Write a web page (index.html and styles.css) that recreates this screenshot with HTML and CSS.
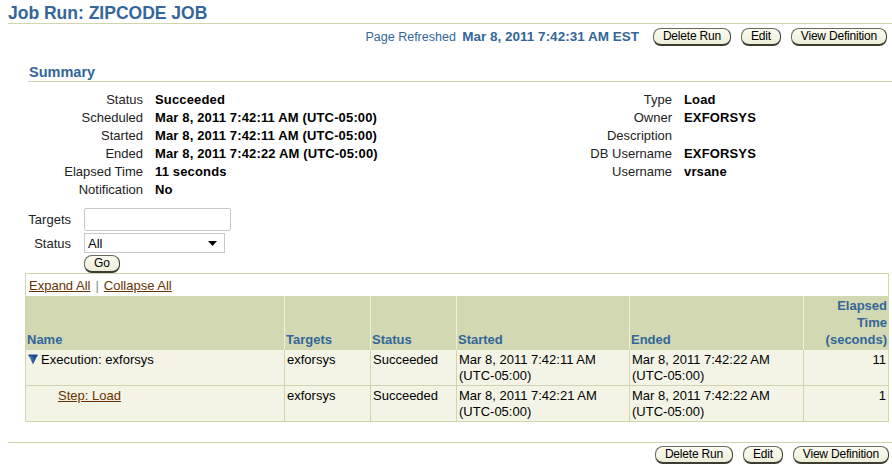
FILE: index.html
```html
<!DOCTYPE html>
<html>
<head>
<meta charset="utf-8">
<link rel="stylesheet" href="styles.css">
</head>
<body>
<div class="page">
  <h1 class="title">Job Run: ZIPCODE JOB</h1>
  <div class="actions">
    <span class="refreshed">Page Refreshed <b>Mar 8, 2011 7:42:31 AM EST</b></span>
    <div class="btns">
      <button class="btn">Delete Run</button>
      <button class="btn">Edit</button>
      <button class="btn">View Definition</button>
    </div>
  </div>

  <div class="section">
    <h2 class="subtitle">Summary</h2>
    <div class="summary">
      <div class="kv left">
        <span class="k">Status</span><span class="v">Succeeded</span>
        <span class="k">Scheduled</span><span class="v">Mar 8, 2011 7:42:11 AM (UTC-05:00)</span>
        <span class="k">Started</span><span class="v">Mar 8, 2011 7:42:11 AM (UTC-05:00)</span>
        <span class="k">Ended</span><span class="v">Mar 8, 2011 7:42:22 AM (UTC-05:00)</span>
        <span class="k">Elapsed Time</span><span class="v">11 seconds</span>
        <span class="k">Notification</span><span class="v">No</span>
      </div>
      <div class="kv right">
        <span class="k">Type</span><span class="v">Load</span>
        <span class="k">Owner</span><span class="v">EXFORSYS</span>
        <span class="k">Description</span><span class="v"></span>
        <span class="k">DB Username</span><span class="v">EXFORSYS</span>
        <span class="k">Username</span><span class="v">vrsane</span>
      </div>
    </div>
  </div>

  <div class="filter">
    <label class="fl">Targets</label><input class="inp" type="text">
    <label class="fl">Status</label>
    <div class="sel"><span>All</span><svg width="9" height="5" viewBox="0 0 9 5"><polygon points="0,0 9,0 4.5,5" fill="#000"/></svg></div>
    <span></span><div><button class="btn go">Go</button></div>
  </div>

  <table class="grid">
    <colgroup>
      <col style="width:259px"><col style="width:86px"><col style="width:86px"><col style="width:173px"><col style="width:174px"><col>
    </colgroup>
    <tr class="tools"><td colspan="6"><a href="#">Expand All</a><span class="sep">|</span><a href="#">Collapse All</a></td></tr>
    <tr class="head">
      <th>Name</th><th>Targets</th><th>Status</th><th>Started</th><th>Ended</th><th class="num">Elapsed<br>Time<br>(seconds)</th>
    </tr>
    <tr>
      <td><svg class="tri" width="10" height="11" viewBox="0 0 10 11"><defs><linearGradient id="g" x1="0" y1="0" x2="1" y2="0"><stop offset="0" stop-color="#6f9ad0"/><stop offset="0.5" stop-color="#2a5ca0"/><stop offset="1" stop-color="#173f78"/></linearGradient></defs><polygon points="0.5,1 9.5,1 5,10.5" fill="url(#g)"/><rect x="0.5" y="0.5" width="9" height="2" fill="#1d4a88"/></svg>Execution: exforsys</td>
      <td>exforsys</td><td>Succeeded</td>
      <td>Mar 8, 2011 7:42:11 AM<br>(UTC-05:00)</td>
      <td>Mar 8, 2011 7:42:22 AM<br>(UTC-05:00)</td>
      <td class="num">11</td>
    </tr>
    <tr>
      <td class="step"><a href="#">Step: Load</a></td>
      <td>exforsys</td><td>Succeeded</td>
      <td>Mar 8, 2011 7:42:21 AM<br>(UTC-05:00)</td>
      <td>Mar 8, 2011 7:42:22 AM<br>(UTC-05:00)</td>
      <td class="num">1</td>
    </tr>
  </table>

  <div class="footer">
    <div class="btns">
      <button class="btn">Delete Run</button>
      <button class="btn">Edit</button>
      <button class="btn">View Definition</button>
    </div>
  </div>
</div>
</body>
</html>
```

FILE: styles.css
```css
html, body { margin: 0; padding: 0; background: #fff; }
body { font-family: "Liberation Sans", Arial, sans-serif; font-size: 13px; color: #000; }
.page { width: 892px; }

.title {
  margin: 0 0 0 8px;
  padding-top: 3px;
  font-size: 17.5px;
  line-height: 20px;
  font-weight: bold;
  color: #336699;
  border-bottom: 1px solid #cfd6ae;
}

.actions {
  display: flex;
  justify-content: flex-end;
  align-items: center;
  padding: 3px 5px 0 0;
  height: 19px;
}
.refreshed { color: #336699; margin-right: 14px; font-size: 12.5px; }
.refreshed b { margin-left: 3px; font-size: 13.5px; }

.btns { display: flex; gap: 9px; }
.btns .btn + .btn { margin-left: 1px; }
.btn {
  font-family: "Liberation Sans", Arial, sans-serif;
  font-size: 12px;
  letter-spacing: -0.2px;
  height: 18px;
  line-height: 15px;
  padding: 0 9px;
  border: 1px solid #6a6a5a;
  border-right-color: #3c3c30;
  border-bottom: 2px solid #3c3c30;
  border-radius: 8px;
  background: linear-gradient(#fbfbf2, #eeeed8);
  color: #000;
  box-sizing: border-box;
}

.section { margin: 18px 0 0 28px; }
.subtitle {
  margin: 0;
  font-size: 14.5px;
  line-height: 17px;
  font-weight: bold;
  color: #336699;
  border-bottom: 1px solid #cfd6ae;
  padding-left: 1px;
}

.summary { display: flex; margin-top: 8px; }
.kv { display: grid; grid-auto-rows: 18px; align-items: center; column-gap: 12px; }
.kv.left { grid-template-columns: 115px auto; width: 544px; }
.kv.right { grid-template-columns: 100px auto; }
.k { text-align: right; color: #222; }
.v { font-weight: bold; letter-spacing: 0.15px; }

.filter {
  display: grid;
  grid-template-columns: 71px auto;
  column-gap: 13px;
  row-gap: 2px;
  margin: 10px 0 0 0;
  align-items: center;
  justify-items: start;
}
.fl { justify-self: end; color: #222; }
.inp {
  width: 147px;
  height: 23px;
  box-sizing: border-box;
  border: 1px solid #c4c9d0;
  border-radius: 2px;
  margin: 0;
}
.sel {
  width: 141px;
  height: 20px;
  box-sizing: border-box;
  border: 1px solid #c4c9d0;
  display: flex;
  align-items: center;
  justify-content: space-between;
  padding: 0 7px 0 3px;
}
.go { height: 18px; padding: 0 9px; }

.grid {
  margin: 0 0 0 25px;
  width: 864px;
  border-collapse: collapse;
  table-layout: fixed;
  border: 1px solid #cfd6ae;
}
.grid td, .grid th { padding: 0 2px; vertical-align: top; }
.tools td { background: #fff; height: 22px; vertical-align: middle; padding-left: 3px; }
.tools a { color: #663300; text-decoration: underline; }
.sep { color: #888; margin: 0 5px; }
.head th {
  background: #d2d9b2;
  color: #336699;
  font-weight: bold;
  text-align: left;
  vertical-align: bottom;
  line-height: 17px;
  height: 52px;
  padding: 0 1px 1px;
  border-left: 1px solid #eef0de;
}
.head th:first-child { border-left: none; }
.head th.num { text-align: right; }
.grid tr:not(.tools):not(.head) td {
  background: #f3f4e6;
  border: 1px solid #cfd6ae;
  line-height: 16px;
  height: 36px;
  padding: 2px 2px 0 2px;
  box-sizing: border-box;
}
.grid td.num { text-align: right; padding-right: 2px; }
.tri { vertical-align: -1px; margin-right: 3px; }
.step { padding-left: 32px !important; }
.step a { color: #663300; text-decoration: underline; }

.footer {
  margin: 20px 0 0 8px;
  border-top: 1px solid #cfd6ae;
  display: flex;
  justify-content: flex-end;
  padding: 3px 3px 0 0;
}
```
